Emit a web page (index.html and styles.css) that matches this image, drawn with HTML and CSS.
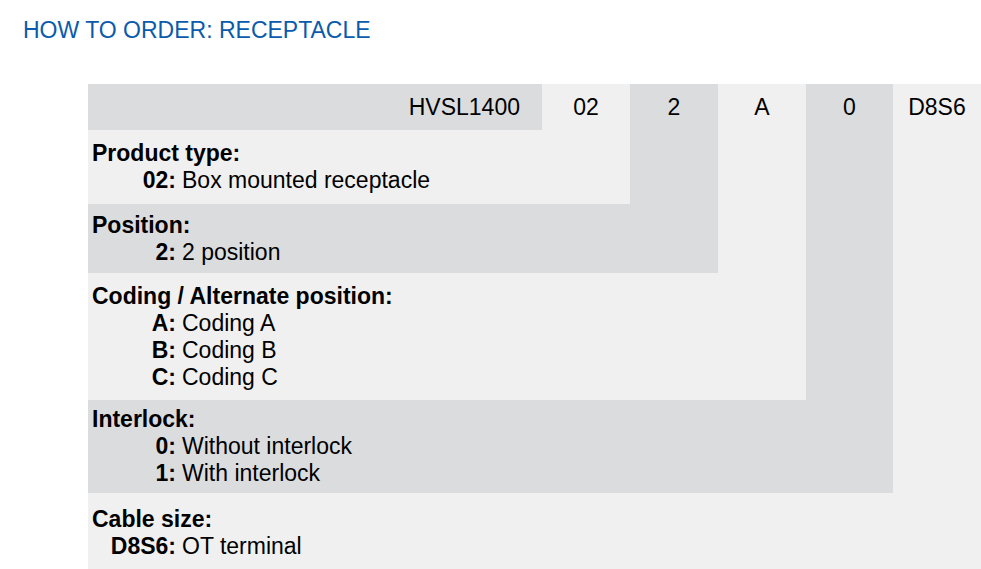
FILE: index.html
```html
<!DOCTYPE html>
<html lang="en">
<head>
<meta charset="utf-8">
<title>How to order: Receptacle</title>
<link rel="stylesheet" href="styles.css">
</head>
<body>
<h1 class="title">HOW TO ORDER: RECEPTACLE</h1>
<div class="order">
  <div class="head dark part">HVSL1400</div>
  <div class="head light code-02">02</div>
  <div class="head dark code-2">2</div>
  <div class="head light code-a">A</div>
  <div class="head dark code-0">0</div>
  <div class="head light code-d8s6">D8S6</div>

  <div class="sec light sec-product">
    <div class="sec-title">Product type:</div>
    <dl class="opts">
      <dt>02:</dt><dd>Box mounted receptacle</dd>
    </dl>
  </div>
  <div class="sec dark sec-position">
    <div class="sec-title">Position:</div>
    <dl class="opts">
      <dt>2:</dt><dd>2 position</dd>
    </dl>
  </div>
  <div class="sec light sec-coding">
    <div class="sec-title">Coding / Alternate position:</div>
    <dl class="opts">
      <dt>A:</dt><dd>Coding A</dd>
      <dt>B:</dt><dd>Coding B</dd>
      <dt>C:</dt><dd>Coding C</dd>
    </dl>
  </div>
  <div class="sec dark sec-interlock">
    <div class="sec-title">Interlock:</div>
    <dl class="opts">
      <dt>0:</dt><dd>Without interlock</dd>
      <dt>1:</dt><dd>With interlock</dd>
    </dl>
  </div>
  <div class="sec light sec-cable">
    <div class="sec-title">Cable size:</div>
    <dl class="opts">
      <dt>D8S6:</dt><dd>OT terminal</dd>
    </dl>
  </div>
</div>
</body>
</html>
```
FILE: styles.css
```css
html { overflow: hidden; }
body {
  margin: 0;
  background: #ffffff;
  font-family: "Liberation Sans", Arial, sans-serif;
  color: #000;
}
.title {
  margin: 0;
  padding: 16px 0 0 23px;
  height: 84px;
  box-sizing: border-box;
  font-size: 23px;
  line-height: 28px;
  font-weight: normal;
  color: #0a5bab;
}
.order {
  margin-left: 88px;
  display: grid;
  grid-template-columns: 454px 88px 88px 88px 87px 88px;
  grid-template-rows: 46px 74px 69px 127px 93px 80px;
  font-size: 23px;
}
.dark { background: #dbdcde; }
.light { background: #f0f0f0; }
.head {
  line-height: 46px;
  text-align: center;
}
.part {
  grid-column: 1;
  grid-row: 1;
  text-align: right;
  padding-right: 22px;
}
.code-02 { grid-column: 2; grid-row: 1; }
.code-2 { grid-column: 3; grid-row: 1 / 3; }
.code-a { grid-column: 4; grid-row: 1 / 4; }
.code-0 { grid-column: 5; grid-row: 1 / 5; }
.code-d8s6 { grid-column: 6; grid-row: 1 / 6; }

.sec {
  display: flex;
  flex-direction: column;
  justify-content: center;
  padding-left: 4px;
  line-height: 27px;
}
.sec-product { grid-column: 1 / 3; grid-row: 2; }
.sec-position { grid-column: 1 / 4; grid-row: 3; }
.sec-coding { grid-column: 1 / 5; grid-row: 4; }
.sec-interlock { grid-column: 1 / 6; grid-row: 5; }
.sec-cable { grid-column: 1 / 7; grid-row: 6; }

.sec-title { font-weight: bold; }
.opts {
  margin: 0;
  display: grid;
  grid-template-columns: 84px auto;
  column-gap: 6px;
  justify-content: start;
}
.opts dt {
  font-weight: bold;
  text-align: right;
}
.opts dd { margin: 0; }
```
